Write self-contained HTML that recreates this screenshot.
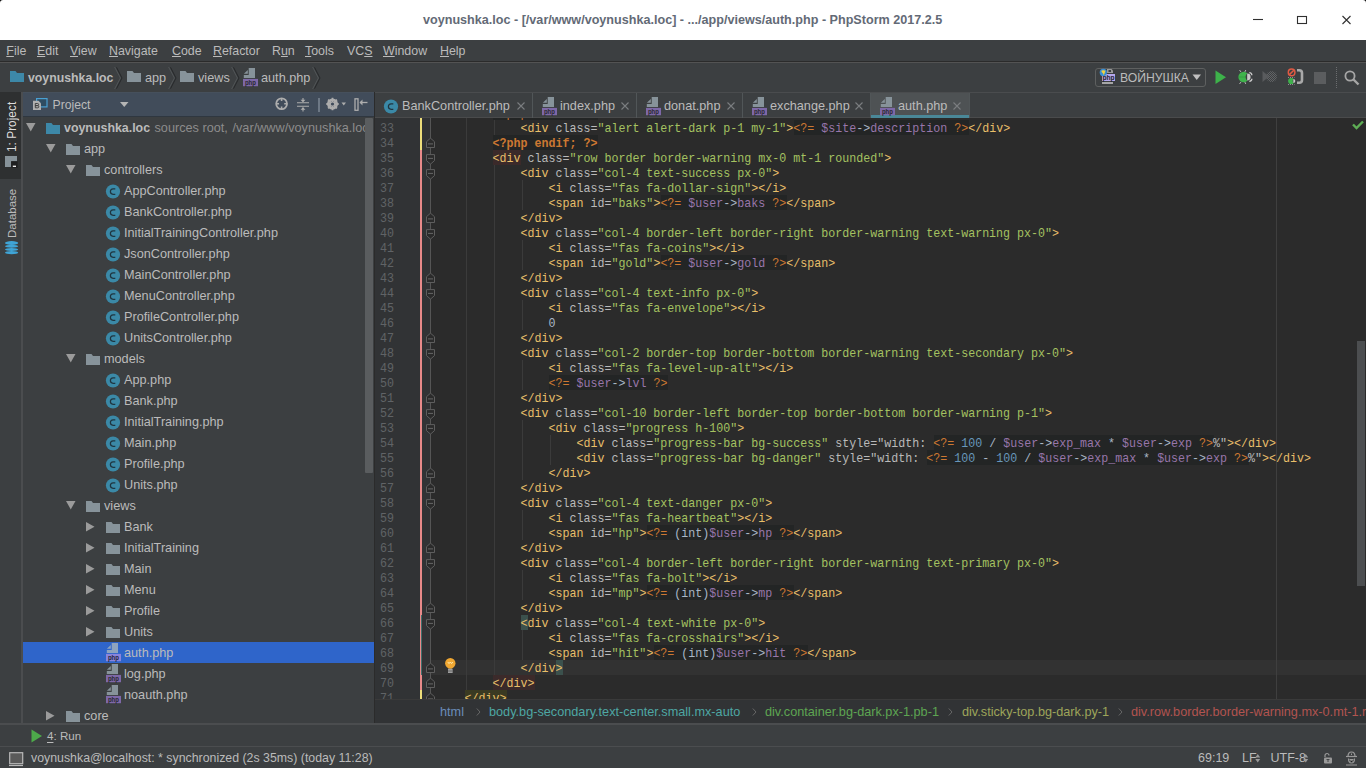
<!DOCTYPE html>
<html><head><meta charset="utf-8">
<style>
*{margin:0;padding:0;box-sizing:border-box}
html,body{width:1366px;height:768px;overflow:hidden;background:#3c3f41;font-family:"Liberation Sans",sans-serif;position:relative}
.A{position:absolute}
svg{position:absolute;overflow:visible}
#title{position:absolute;left:0;top:0;width:1366px;height:40px;background:#fff}
#title .tl{position:absolute;left:423px;top:13px;font-size:12.6px;font-weight:bold;color:#636a76;white-space:nowrap}
#menu{position:absolute;left:0;top:40px;width:1366px;height:21px;background:#3c3f41}
#menu span{position:absolute;top:3px;font-size:12.4px;color:#bbbbbb;white-space:nowrap;line-height:16px}
#menu u{text-decoration:underline;text-underline-offset:0.5px;text-decoration-thickness:1px}
#sep1{position:absolute;left:0;top:61px;width:1366px;height:1px;background:#2b2b2b}
#nav{position:absolute;left:0;top:62px;width:1366px;height:30px;background:#3c3f41}
.nt{position:absolute;top:8px;font-size:12.7px;color:#bbbbbb;white-space:nowrap;line-height:16px}
#strip{position:absolute;left:0;top:92px;width:23px;height:631px;background:#3c3f41;border-right:2px solid #4b4d4f}
#stripsel{position:absolute;left:0;top:92px;width:21px;height:87px;background:#2e3031}
.vt{position:absolute;transform-origin:0 0;transform:rotate(-90deg);font-size:12.6px;color:#bbbbbb;white-space:nowrap;line-height:14px}
#proj{position:absolute;left:23px;top:92px;width:351px;height:631px;background:#3c3f41}
#phead{position:absolute;left:23px;top:92px;width:351px;height:25px;background:#414c5a;border-top:1px solid #46505c;border-bottom:1px solid #2f3740}
.tt{position:absolute;font-size:12.7px;color:#bbbbbb;white-space:nowrap;line-height:20px;height:20px}
.tt.b{font-weight:bold;font-size:12.4px}
.tt.gr{color:#8c8c8c}
.sel{position:absolute;left:23px;width:351px;height:21px;background:#2f65ca}
#pscroll{position:absolute;left:365px;top:118px;width:8px;height:355px;background:#5a5d5f;border-radius:1px}
#vsplit{position:absolute;left:374px;top:92px;width:1px;height:631px;background:#2b2b2b}
#editor{position:absolute;left:375px;top:118px;width:991px;height:581px;background:#2b2b2b;overflow:hidden}
#tabs{position:absolute;left:375px;top:92px;width:991px;height:26px;background:#3c3f41;border-top:1px solid #4a4c4e}
.tab{position:absolute;top:0;height:25px;border-right:1px solid #515658}
.tab.act{background:#4e5254}
.tab.act:after{content:"";position:absolute;left:0;right:0;bottom:0;height:3.5px;background:#4a8898}
.tabt{position:absolute;top:5px;font-size:12.7px;color:#bbbbbb;white-space:nowrap;line-height:16px}
.ln{position:absolute;left:61.5px;height:15px;line-height:15px;padding-top:2px;transform:scaleY(1.15);transform-origin:0 11.7px;font-family:"Liberation Mono",monospace;font-size:11.667px;white-space:pre;color:#a9b7c6}
.lnum{position:absolute;left:0;width:19px;text-align:right;height:15px;line-height:15px;padding-top:2px;transform:scaleY(1.15);transform-origin:0 11.7px;font-family:"Liberation Mono",monospace;font-size:11.667px;color:#606366}
.t{color:#e8bf6a}.a{color:#bababa}.v{color:#a5c261}.d{color:#a9b7c6}.p{color:#cc7832}.pb{color:#cc7832;font-weight:bold}
.var{color:#9876aa}.n{color:#6897bb}
.P{background:#232525}
.hl35{color:#e8bf6a;background:#3b2a2a}
.hl70{color:#e8bf6a;background:#3b2a2a}
.hl71{color:#e8bf6a;background:#3a3a22}
.bm{color:#e8bf6a;background:#3b514d}
#crumbs{position:absolute;left:375px;top:699px;width:991px;height:24px;background:#313335;border-top:1px solid #3a3a3a}
.cr{position:absolute;top:4px;font-size:12.7px;white-space:nowrap;line-height:16px}
#runbar{position:absolute;left:0;top:723px;width:1366px;height:23px;background:#3c3f41;border-top:2px solid #4b4d4f}
#status{position:absolute;left:0;top:746px;width:1366px;height:22px;background:#3c3f41;border-top:1px solid #4b4d4f}
.st{position:absolute;font-size:12.5px;color:#bbbbbb;white-space:nowrap;line-height:16px}
</style></head><body>
<div id="title"><div class="tl">voynushka.loc - [/var/www/voynushka.loc] - .../app/views/auth.php - PhpStorm 2017.2.5</div>
<svg style="left:0;top:0" width="4" height="4"><path d="M0 0H3A3 3 0 0 0 0 3Z" fill="#000"/></svg>
<svg style="left:1362px;top:0" width="4" height="4"><path d="M4 0H1A3 3 0 0 1 4 3Z" fill="#000"/></svg>
<svg style="left:1252px;top:14px" width="12" height="12"><path d="M1 5.5H11" stroke="#303030" stroke-width="1.1"/></svg>
<svg style="left:1296px;top:15px" width="12" height="12"><rect x="1.5" y="1.5" width="9" height="7" fill="none" stroke="#303030" stroke-width="1.1"/></svg>
<svg style="left:1341px;top:15px" width="12" height="12"><path d="M1.5 1L9.5 9M9.5 1L1.5 9" stroke="#303030" stroke-width="1.1"/></svg>
</div>
<div id="menu">
<span style="left:6.3px"><u>F</u>ile</span><span style="left:37px"><u>E</u>dit</span><span style="left:70px"><u>V</u>iew</span><span style="left:109px"><u>N</u>avigate</span><span style="left:172px"><u>C</u>ode</span><span style="left:213px"><u>R</u>efactor</span><span style="left:272px">R<u>u</u>n</span><span style="left:305px"><u>T</u>ools</span><span style="left:347px">VC<u>S</u></span><span style="left:383px"><u>W</u>indow</span><span style="left:440px"><u>H</u>elp</span>
</div>
<div id="sep1"></div>
<div id="nav"><svg class="ic" style="left:10px;top:9px" width="15" height="12" viewBox="0 0 15 12"><path d="M0 0H5.5L7 2H14V11H0Z" fill="#3d88a8"/></svg>
<div class="nt" style="left:28px;font-weight:bold;font-size:12.3px">voynushka.loc</div>
<svg style="left:114.0px;top:4.5px" width="9" height="23" viewBox="0 0 9 23"><path d="M0.6 0L6.4 11L0.6 22" stroke="#505456" stroke-width="1" fill="none"/><path d="M2.5 0.3L8 11L2.5 21.7" stroke="#26282a" stroke-width="1" fill="none"/></svg>
<svg class="ic" style="left:127px;top:9px" width="15" height="12" viewBox="0 0 15 12"><path d="M0 0H5.5L7 2H14V11H0Z" fill="#87939a"/></svg>
<div class="nt" style="left:145px">app</div>
<svg style="left:167.5px;top:4.5px" width="9" height="23" viewBox="0 0 9 23"><path d="M0.6 0L6.4 11L0.6 22" stroke="#505456" stroke-width="1" fill="none"/><path d="M2.5 0.3L8 11L2.5 21.7" stroke="#26282a" stroke-width="1" fill="none"/></svg>
<svg class="ic" style="left:180px;top:9px" width="15" height="12" viewBox="0 0 15 12"><path d="M0 0H5.5L7 2H14V11H0Z" fill="#87939a"/></svg>
<div class="nt" style="left:198px">views</div>
<svg style="left:231.0px;top:4.5px" width="9" height="23" viewBox="0 0 9 23"><path d="M0.6 0L6.4 11L0.6 22" stroke="#505456" stroke-width="1" fill="none"/><path d="M2.5 0.3L8 11L2.5 21.7" stroke="#26282a" stroke-width="1" fill="none"/></svg>
<svg class="ic" style="left:243.0px;top:5.5px" width="16" height="18" viewBox="0 0 16 18"><path d="M5.7 0H12V10H0.8V7H5.7Z" fill="#87939a"/><path d="M0.8 5.75L4.8 1.9V5.75Z" fill="#87939a"/><rect x="0" y="10.9" width="15" height="7.3" fill="#7e68a8"/><text x="1.9" y="17" font-family="Liberation Sans" font-weight="bold" font-size="7.4" fill="#2a2830" textLength="11.1" lengthAdjust="spacingAndGlyphs">php</text></svg>
<div class="nt" style="left:261px">auth.php</div>
<svg style="left:312.0px;top:4.5px" width="9" height="23" viewBox="0 0 9 23"><path d="M0.6 0L6.4 11L0.6 22" stroke="#505456" stroke-width="1" fill="none"/><path d="M2.5 0.3L8 11L2.5 21.7" stroke="#26282a" stroke-width="1" fill="none"/></svg>
<div class="A" style="left:1095px;top:6px;width:111px;height:19px;border:1px solid #5e6060;border-radius:3px"></div>
<svg style="left:1099px;top:6px" width="18" height="18" viewBox="0 0 18 18"><path d="M8 1H12.5L14 2.5V5H8Z" fill="#9a9a9a"/><path d="M9.5 2L12 2V4H9.5Z" fill="#3c3f41"/><rect x="3" y="6" width="13" height="7" fill="#b5a7ee"/><text x="9.5" y="11.8" font-family="Liberation Sans" font-weight="bold" font-size="6.6" fill="#1e1e28" text-anchor="middle">php</text><rect x="3" y="14" width="11" height="2" fill="#a6a6a6"/><circle cx="4.3" cy="4.4" r="3.6" fill="#3b8fd4"/><path d="M2.6 2.6Q4.5 1.6 6.5 2.8L5.5 5.4L4.6 7.3L4 5.2L2.6 4Z" fill="#f2d33c"/></svg>
<div class="nt" style="left:1120px;top:8px;font-size:12.2px">ВОЙНУШКА</div>
<svg style="left:1192px;top:12px" width="10" height="7"><path d="M0.5 0.5H9L4.75 6Z" fill="#c0c0c0"/></svg>
<svg style="left:1215px;top:8px" width="12" height="15"><path d="M0.5 0.5L11 7.2L0.5 14Z" fill="#3db24a"/></svg>
<svg style="left:1237px;top:7px" width="17" height="16" viewBox="0 0 17 16"><path d="M2.5 1L4 3M8.8 1L7.8 3M2.5 15L4 13M8.8 15L7.8 13" stroke="#bdbdbd" stroke-width="0.9"/><circle cx="6.6" cy="8" r="5.2" fill="#3fb34c"/><path d="M1.5 8H11" stroke="#2f9a3c" stroke-width="0.7"/><circle cx="12.6" cy="8" r="4" fill="#3c3f41"/><path d="M10.2 4.6A3.4 3.4 0 0 1 10.2 11.4Z" fill="#c9c9c9"/><path d="M12.3 3.6Q14.9 3.9 14.9 6.2M12.3 12.4Q14.9 12.1 14.9 9.8" stroke="#c9c9c9" stroke-width="1.3" fill="none"/></svg>
<svg style="left:1262px;top:7px" width="16" height="16" viewBox="0 0 16 16"><defs><pattern id="dp" width="2" height="2" patternUnits="userSpaceOnUse"><rect width="1" height="1" fill="#626466"/><rect x="1" y="1" width="1" height="1" fill="#626466"/></pattern></defs><circle cx="9.5" cy="7.5" r="5.5" fill="url(#dp)"/><path d="M0.5 2L7 7.5L0.5 13Z" fill="#595b5d"/></svg>
<svg style="left:1287px;top:6px" width="17" height="17" viewBox="0 0 17 17"><circle cx="4.6" cy="4.4" r="3.3" fill="none" stroke="#e05a44" stroke-width="1.5"/><path d="M2.4 6.6L6.8 2.2" stroke="#e05a44" stroke-width="1.5"/><circle cx="4.2" cy="13" r="3.1" fill="#3fb34c"/><circle cx="7.8" cy="13" r="2.2" fill="#3c3f41"/><path d="M6.3 11A2 2 0 0 1 6.3 15Z" fill="#c9c9c9"/><path d="M1 9.5H7.5M1 16.5H7.5" stroke="#c9c9c9" stroke-width="0.6" stroke-dasharray="1 1"/><path d="M10 2.2H12.2A2.8 2.8 0 0 1 15 5V12A2.8 2.8 0 0 1 12.2 14.8H10" stroke="#a9a9a9" stroke-width="2.6" fill="none"/></svg>
<div class="A" style="left:1314px;top:10px;width:12px;height:12px;background:#5b5d5f"></div>
<div class="A" style="left:1336px;top:5px;width:1px;height:21px;border-left:1px dotted #6b6d6f"></div>
<svg style="left:1344px;top:8px" width="16" height="16" viewBox="0 0 16 16"><circle cx="6" cy="6" r="4.6" fill="none" stroke="#a6a6a6" stroke-width="1.8"/><path d="M9.5 9.5L14.5 14.5" stroke="#a6a6a6" stroke-width="2.4"/></svg></div><div class="A" style="left:0;top:62px;width:1366px;height:1px;background:#535353"></div>
<div id="strip"></div>
<div id="stripsel"></div>
<div class="vt" style="left:4.5px;top:151.5px;color:#dddddd;font-size:11.9px">1: Project</div>
<svg style="left:5px;top:156px" width="13" height="12" viewBox="0 0 13 12"><path d="M0 0H12V5.3H6V11H0Z" fill="#87939a"/><rect x="6.3" y="5.3" width="6.3" height="6.5" fill="#1e1f20"/><path d="M7.8 10.3H11" stroke="#eeeeee" stroke-width="1.4"/></svg>
<div class="vt" style="left:4.5px;top:238px;font-size:11.5px">Database</div>
<svg style="left:5px;top:240.5px" width="14" height="14" viewBox="0 0 14 14"><ellipse cx="6.6" cy="2" rx="6.6" ry="1.9" fill="#3fa4d6"/><ellipse cx="6.6" cy="5.3" rx="6.6" ry="1.5" fill="#3fa4d6"/><ellipse cx="6.6" cy="8.5" rx="6.6" ry="1.5" fill="#3fa4d6"/><ellipse cx="6.6" cy="11.7" rx="6.6" ry="1.6" fill="#3fa4d6"/></svg>
<div id="proj"></div>
<div id="phead"></div>
<svg style="left:33px;top:98px" width="15" height="13" viewBox="0 0 15 13"><rect x="3.6" y="0.6" width="10.4" height="8.3" fill="#2f4d62" stroke="#4aa0d2" stroke-width="1.2"/><path d="M0 2.8H5.5L8 5.3V12H0Z" fill="#b0b0b0"/><path d="M2.3 5.5H4.6Q5.6 5.5 5.6 6.6Q5.6 7.6 4.6 7.6H2.3ZM2.3 7.6H4.8Q5.8 7.6 5.8 8.7Q5.8 9.8 4.8 9.8H2.3Z" fill="none" stroke="#3a3a3a" stroke-width="0.9"/></svg>
<div class="tt" style="left:52.5px;top:94.5px;font-size:12.2px">Project</div>
<svg style="left:120px;top:102px" width="9" height="6"><path d="M0 0H8.5L4.25 5Z" fill="#b5b5b5"/></svg>
<svg style="left:275px;top:97px" width="14" height="14" viewBox="0 0 14 14"><circle cx="6.6" cy="6.8" r="5.4" fill="none" stroke="#adadad" stroke-width="1.8"/><path d="M6.6 1V4M6.6 9.6V12.6M1 6.8H4M9.2 6.8H12.2" stroke="#adadad" stroke-width="1.6"/></svg>
<svg style="left:297px;top:98px" width="13" height="14" viewBox="0 0 13 14"><path d="M0 4.8H12M0 8.2H12" stroke="#adadad" stroke-width="1.1"/><path d="M6 0V3.5M6 9.5V13.5" stroke="#adadad" stroke-width="1.1"/><path d="M3.5 1.8L6 4.3L8.5 1.8M3.5 11.7L6 9.2L8.5 11.7" fill="#adadad"/></svg>
<div class="A" style="left:318px;top:98px;width:2px;height:14px;background:#6d7885"></div>
<svg style="left:326px;top:97px" width="22" height="14" viewBox="0 0 22 14"><circle cx="6.5" cy="7" r="4.2" fill="none" stroke="#adadad" stroke-width="2.6"/><path d="M6.5 0.8V13.2M0.3 7H12.7M2.1 2.6L10.9 11.4M10.9 2.6L2.1 11.4" stroke="#adadad" stroke-width="1.8"/><circle cx="6.5" cy="7" r="1.6" fill="#3f4b5b"/><path d="M15.5 5.5H20L17.75 8.5Z" fill="#adadad"/></svg>
<svg style="left:354px;top:98px" width="14" height="13" viewBox="0 0 14 13"><rect x="1" y="0.8" width="3" height="11.5" fill="none" stroke="#adadad" stroke-width="1.3"/><path d="M6 4.5H13.5" stroke="#adadad" stroke-width="1.3"/><path d="M5.5 4.5L8.5 1.5V7.5Z" fill="#adadad"/></svg>
<svg class="ic" style="left:26px;top:123px" width="10" height="9" viewBox="0 0 10 9"><path d="M0 0H9.5L4.75 8.5Z" fill="#9b9b9b"/></svg>
<svg class="ic" style="left:46px;top:123px" width="15" height="12" viewBox="0 0 15 12"><path d="M0 0H5.5L7 2H14V11H0Z" fill="#3d88a8"/></svg>
<div class="tt b" style="left:64px;top:118px">voynushka.loc</div>
<div class="tt gr" style="left:154.5px;top:118px">sources root,</div>
<div class="tt gr" style="left:232.5px;top:118px">/var/www/voynushka.loc</div>
<svg class="ic" style="left:46px;top:144px" width="10" height="9" viewBox="0 0 10 9"><path d="M0 0H9.5L4.75 8.5Z" fill="#9b9b9b"/></svg>
<svg class="ic" style="left:66px;top:144px" width="15" height="12" viewBox="0 0 15 12"><path d="M0 0H5.5L7 2H14V11H0Z" fill="#87939a"/></svg>
<div class="tt" style="left:84px;top:139px">app</div>
<svg class="ic" style="left:66px;top:165px" width="10" height="9" viewBox="0 0 10 9"><path d="M0 0H9.5L4.75 8.5Z" fill="#9b9b9b"/></svg>
<svg class="ic" style="left:86px;top:165px" width="15" height="12" viewBox="0 0 15 12"><path d="M0 0H5.5L7 2H14V11H0Z" fill="#87939a"/></svg>
<div class="tt" style="left:104px;top:160px">controllers</div>
<svg class="ic" style="left:106.0px;top:183.5px" width="15" height="15" viewBox="0 0 15 15"><circle cx="7" cy="7.5" r="7.1" fill="#3b89a7"/><path d="M9.3 4.9H7.1Q4.4 4.9 4.4 7.6Q4.4 10.3 7.1 10.3H9.3" stroke="#1f3540" stroke-width="1.25" fill="none"/></svg>
<div class="tt" style="left:124px;top:181px">AppController.php</div>
<svg class="ic" style="left:106.0px;top:204.5px" width="15" height="15" viewBox="0 0 15 15"><circle cx="7" cy="7.5" r="7.1" fill="#3b89a7"/><path d="M9.3 4.9H7.1Q4.4 4.9 4.4 7.6Q4.4 10.3 7.1 10.3H9.3" stroke="#1f3540" stroke-width="1.25" fill="none"/></svg>
<div class="tt" style="left:124px;top:202px">BankController.php</div>
<svg class="ic" style="left:106.0px;top:225.5px" width="15" height="15" viewBox="0 0 15 15"><circle cx="7" cy="7.5" r="7.1" fill="#3b89a7"/><path d="M9.3 4.9H7.1Q4.4 4.9 4.4 7.6Q4.4 10.3 7.1 10.3H9.3" stroke="#1f3540" stroke-width="1.25" fill="none"/></svg>
<div class="tt" style="left:124px;top:223px">InitialTrainingController.php</div>
<svg class="ic" style="left:106.0px;top:246.5px" width="15" height="15" viewBox="0 0 15 15"><circle cx="7" cy="7.5" r="7.1" fill="#3b89a7"/><path d="M9.3 4.9H7.1Q4.4 4.9 4.4 7.6Q4.4 10.3 7.1 10.3H9.3" stroke="#1f3540" stroke-width="1.25" fill="none"/></svg>
<div class="tt" style="left:124px;top:244px">JsonController.php</div>
<svg class="ic" style="left:106.0px;top:267.5px" width="15" height="15" viewBox="0 0 15 15"><circle cx="7" cy="7.5" r="7.1" fill="#3b89a7"/><path d="M9.3 4.9H7.1Q4.4 4.9 4.4 7.6Q4.4 10.3 7.1 10.3H9.3" stroke="#1f3540" stroke-width="1.25" fill="none"/></svg>
<div class="tt" style="left:124px;top:265px">MainController.php</div>
<svg class="ic" style="left:106.0px;top:288.5px" width="15" height="15" viewBox="0 0 15 15"><circle cx="7" cy="7.5" r="7.1" fill="#3b89a7"/><path d="M9.3 4.9H7.1Q4.4 4.9 4.4 7.6Q4.4 10.3 7.1 10.3H9.3" stroke="#1f3540" stroke-width="1.25" fill="none"/></svg>
<div class="tt" style="left:124px;top:286px">MenuController.php</div>
<svg class="ic" style="left:106.0px;top:309.5px" width="15" height="15" viewBox="0 0 15 15"><circle cx="7" cy="7.5" r="7.1" fill="#3b89a7"/><path d="M9.3 4.9H7.1Q4.4 4.9 4.4 7.6Q4.4 10.3 7.1 10.3H9.3" stroke="#1f3540" stroke-width="1.25" fill="none"/></svg>
<div class="tt" style="left:124px;top:307px">ProfileController.php</div>
<svg class="ic" style="left:106.0px;top:330.5px" width="15" height="15" viewBox="0 0 15 15"><circle cx="7" cy="7.5" r="7.1" fill="#3b89a7"/><path d="M9.3 4.9H7.1Q4.4 4.9 4.4 7.6Q4.4 10.3 7.1 10.3H9.3" stroke="#1f3540" stroke-width="1.25" fill="none"/></svg>
<div class="tt" style="left:124px;top:328px">UnitsController.php</div>
<svg class="ic" style="left:66px;top:354px" width="10" height="9" viewBox="0 0 10 9"><path d="M0 0H9.5L4.75 8.5Z" fill="#9b9b9b"/></svg>
<svg class="ic" style="left:86px;top:354px" width="15" height="12" viewBox="0 0 15 12"><path d="M0 0H5.5L7 2H14V11H0Z" fill="#87939a"/></svg>
<div class="tt" style="left:104px;top:349px">models</div>
<svg class="ic" style="left:106.0px;top:372.5px" width="15" height="15" viewBox="0 0 15 15"><circle cx="7" cy="7.5" r="7.1" fill="#3b89a7"/><path d="M9.3 4.9H7.1Q4.4 4.9 4.4 7.6Q4.4 10.3 7.1 10.3H9.3" stroke="#1f3540" stroke-width="1.25" fill="none"/></svg>
<div class="tt" style="left:124px;top:370px">App.php</div>
<svg class="ic" style="left:106.0px;top:393.5px" width="15" height="15" viewBox="0 0 15 15"><circle cx="7" cy="7.5" r="7.1" fill="#3b89a7"/><path d="M9.3 4.9H7.1Q4.4 4.9 4.4 7.6Q4.4 10.3 7.1 10.3H9.3" stroke="#1f3540" stroke-width="1.25" fill="none"/></svg>
<div class="tt" style="left:124px;top:391px">Bank.php</div>
<svg class="ic" style="left:106.0px;top:414.5px" width="15" height="15" viewBox="0 0 15 15"><circle cx="7" cy="7.5" r="7.1" fill="#3b89a7"/><path d="M9.3 4.9H7.1Q4.4 4.9 4.4 7.6Q4.4 10.3 7.1 10.3H9.3" stroke="#1f3540" stroke-width="1.25" fill="none"/></svg>
<div class="tt" style="left:124px;top:412px">InitialTraining.php</div>
<svg class="ic" style="left:106.0px;top:435.5px" width="15" height="15" viewBox="0 0 15 15"><circle cx="7" cy="7.5" r="7.1" fill="#3b89a7"/><path d="M9.3 4.9H7.1Q4.4 4.9 4.4 7.6Q4.4 10.3 7.1 10.3H9.3" stroke="#1f3540" stroke-width="1.25" fill="none"/></svg>
<div class="tt" style="left:124px;top:433px">Main.php</div>
<svg class="ic" style="left:106.0px;top:456.5px" width="15" height="15" viewBox="0 0 15 15"><circle cx="7" cy="7.5" r="7.1" fill="#3b89a7"/><path d="M9.3 4.9H7.1Q4.4 4.9 4.4 7.6Q4.4 10.3 7.1 10.3H9.3" stroke="#1f3540" stroke-width="1.25" fill="none"/></svg>
<div class="tt" style="left:124px;top:454px">Profile.php</div>
<svg class="ic" style="left:106.0px;top:477.5px" width="15" height="15" viewBox="0 0 15 15"><circle cx="7" cy="7.5" r="7.1" fill="#3b89a7"/><path d="M9.3 4.9H7.1Q4.4 4.9 4.4 7.6Q4.4 10.3 7.1 10.3H9.3" stroke="#1f3540" stroke-width="1.25" fill="none"/></svg>
<div class="tt" style="left:124px;top:475px">Units.php</div>
<svg class="ic" style="left:66px;top:501px" width="10" height="9" viewBox="0 0 10 9"><path d="M0 0H9.5L4.75 8.5Z" fill="#9b9b9b"/></svg>
<svg class="ic" style="left:86px;top:501px" width="15" height="12" viewBox="0 0 15 12"><path d="M0 0H5.5L7 2H14V11H0Z" fill="#87939a"/></svg>
<div class="tt" style="left:104px;top:496px">views</div>
<svg class="ic" style="left:86px;top:522px" width="9" height="10" viewBox="0 0 9 10"><path d="M0 0V9.5L8.5 4.75Z" fill="#9b9b9b"/></svg>
<svg class="ic" style="left:106px;top:522px" width="15" height="12" viewBox="0 0 15 12"><path d="M0 0H5.5L7 2H14V11H0Z" fill="#87939a"/></svg>
<div class="tt" style="left:124px;top:517px">Bank</div>
<svg class="ic" style="left:86px;top:543px" width="9" height="10" viewBox="0 0 9 10"><path d="M0 0V9.5L8.5 4.75Z" fill="#9b9b9b"/></svg>
<svg class="ic" style="left:106px;top:543px" width="15" height="12" viewBox="0 0 15 12"><path d="M0 0H5.5L7 2H14V11H0Z" fill="#87939a"/></svg>
<div class="tt" style="left:124px;top:538px">InitialTraining</div>
<svg class="ic" style="left:86px;top:564px" width="9" height="10" viewBox="0 0 9 10"><path d="M0 0V9.5L8.5 4.75Z" fill="#9b9b9b"/></svg>
<svg class="ic" style="left:106px;top:564px" width="15" height="12" viewBox="0 0 15 12"><path d="M0 0H5.5L7 2H14V11H0Z" fill="#87939a"/></svg>
<div class="tt" style="left:124px;top:559px">Main</div>
<svg class="ic" style="left:86px;top:585px" width="9" height="10" viewBox="0 0 9 10"><path d="M0 0V9.5L8.5 4.75Z" fill="#9b9b9b"/></svg>
<svg class="ic" style="left:106px;top:585px" width="15" height="12" viewBox="0 0 15 12"><path d="M0 0H5.5L7 2H14V11H0Z" fill="#87939a"/></svg>
<div class="tt" style="left:124px;top:580px">Menu</div>
<svg class="ic" style="left:86px;top:606px" width="9" height="10" viewBox="0 0 9 10"><path d="M0 0V9.5L8.5 4.75Z" fill="#9b9b9b"/></svg>
<svg class="ic" style="left:106px;top:606px" width="15" height="12" viewBox="0 0 15 12"><path d="M0 0H5.5L7 2H14V11H0Z" fill="#87939a"/></svg>
<div class="tt" style="left:124px;top:601px">Profile</div>
<svg class="ic" style="left:86px;top:627px" width="9" height="10" viewBox="0 0 9 10"><path d="M0 0V9.5L8.5 4.75Z" fill="#9b9b9b"/></svg>
<svg class="ic" style="left:106px;top:627px" width="15" height="12" viewBox="0 0 15 12"><path d="M0 0H5.5L7 2H14V11H0Z" fill="#87939a"/></svg>
<div class="tt" style="left:124px;top:622px">Units</div>
<div class="sel" style="top:642px"></div>
<svg class="ic" style="left:106.0px;top:643.0px" width="16" height="18" viewBox="0 0 16 18"><path d="M5.7 0H12V10H0.8V7H5.7Z" fill="#8ea4be"/><path d="M0.8 5.75L4.8 1.9V5.75Z" fill="#8ea4be"/><rect x="0" y="10.9" width="15" height="7.3" fill="#8a85dc"/><text x="1.9" y="17" font-family="Liberation Sans" font-weight="bold" font-size="7.4" fill="#24243a" textLength="11.1" lengthAdjust="spacingAndGlyphs">php</text></svg>
<div class="tt" style="left:124px;top:643px">auth.php</div>
<svg class="ic" style="left:106.0px;top:664.0px" width="16" height="18" viewBox="0 0 16 18"><path d="M5.7 0H12V10H0.8V7H5.7Z" fill="#87939a"/><path d="M0.8 5.75L4.8 1.9V5.75Z" fill="#87939a"/><rect x="0" y="10.9" width="15" height="7.3" fill="#7e68a8"/><text x="1.9" y="17" font-family="Liberation Sans" font-weight="bold" font-size="7.4" fill="#2a2830" textLength="11.1" lengthAdjust="spacingAndGlyphs">php</text></svg>
<div class="tt" style="left:124px;top:664px">log.php</div>
<svg class="ic" style="left:106.0px;top:685.0px" width="16" height="18" viewBox="0 0 16 18"><path d="M5.7 0H12V10H0.8V7H5.7Z" fill="#87939a"/><path d="M0.8 5.75L4.8 1.9V5.75Z" fill="#87939a"/><rect x="0" y="10.9" width="15" height="7.3" fill="#7e68a8"/><text x="1.9" y="17" font-family="Liberation Sans" font-weight="bold" font-size="7.4" fill="#2a2830" textLength="11.1" lengthAdjust="spacingAndGlyphs">php</text></svg>
<div class="tt" style="left:124px;top:685px">noauth.php</div>
<svg class="ic" style="left:46px;top:711px" width="9" height="10" viewBox="0 0 9 10"><path d="M0 0V9.5L8.5 4.75Z" fill="#9b9b9b"/></svg>
<svg class="ic" style="left:66px;top:711px" width="15" height="12" viewBox="0 0 15 12"><path d="M0 0H5.5L7 2H14V11H0Z" fill="#87939a"/></svg>
<div class="tt" style="left:84px;top:706px">core</div>
<div id="pscroll"></div>
<div id="vsplit"></div>
<div id="tabs"><div class="A" style="left:0;top:24px;width:991px;height:1px;background:#4a4b4c"></div><div class="tab" style="left:0px;width:158px"></div>
<svg class="ic" style="left:9.0px;top:6.0px" width="15" height="15" viewBox="0 0 15 15"><circle cx="7" cy="7.5" r="7.1" fill="#3b89a7"/><path d="M9.3 4.9H7.1Q4.4 4.9 4.4 7.6Q4.4 10.3 7.1 10.3H9.3" stroke="#1f3540" stroke-width="1.25" fill="none"/></svg>
<div class="tabt" style="left:27px">BankController.php</div>
<svg style="left:142px;top:9px" width="8" height="8" viewBox="0 0 8 8"><path d="M0.5 0.5L7.5 7.5M7.5 0.5L0.5 7.5" stroke="#7b7e80" stroke-width="1.1"/></svg>
<div class="tab" style="left:158px;width:104px"></div>
<svg class="ic" style="left:167.0px;top:3.5px" width="16" height="18" viewBox="0 0 16 18"><path d="M5.7 0H12V10H0.8V7H5.7Z" fill="#87939a"/><path d="M0.8 5.75L4.8 1.9V5.75Z" fill="#87939a"/><rect x="0" y="10.9" width="15" height="7.3" fill="#7e68a8"/><text x="1.9" y="17" font-family="Liberation Sans" font-weight="bold" font-size="7.4" fill="#2a2830" textLength="11.1" lengthAdjust="spacingAndGlyphs">php</text></svg>
<div class="tabt" style="left:185px">index.php</div>
<svg style="left:246px;top:9px" width="8" height="8" viewBox="0 0 8 8"><path d="M0.5 0.5L7.5 7.5M7.5 0.5L0.5 7.5" stroke="#7b7e80" stroke-width="1.1"/></svg>
<div class="tab" style="left:262px;width:106px"></div>
<svg class="ic" style="left:271.0px;top:3.5px" width="16" height="18" viewBox="0 0 16 18"><path d="M5.7 0H12V10H0.8V7H5.7Z" fill="#87939a"/><path d="M0.8 5.75L4.8 1.9V5.75Z" fill="#87939a"/><rect x="0" y="10.9" width="15" height="7.3" fill="#7e68a8"/><text x="1.9" y="17" font-family="Liberation Sans" font-weight="bold" font-size="7.4" fill="#2a2830" textLength="11.1" lengthAdjust="spacingAndGlyphs">php</text></svg>
<div class="tabt" style="left:289px">donat.php</div>
<svg style="left:352px;top:9px" width="8" height="8" viewBox="0 0 8 8"><path d="M0.5 0.5L7.5 7.5M7.5 0.5L0.5 7.5" stroke="#7b7e80" stroke-width="1.1"/></svg>
<div class="tab" style="left:368px;width:128px"></div>
<svg class="ic" style="left:377.0px;top:3.5px" width="16" height="18" viewBox="0 0 16 18"><path d="M5.7 0H12V10H0.8V7H5.7Z" fill="#87939a"/><path d="M0.8 5.75L4.8 1.9V5.75Z" fill="#87939a"/><rect x="0" y="10.9" width="15" height="7.3" fill="#7e68a8"/><text x="1.9" y="17" font-family="Liberation Sans" font-weight="bold" font-size="7.4" fill="#2a2830" textLength="11.1" lengthAdjust="spacingAndGlyphs">php</text></svg>
<div class="tabt" style="left:395px">exchange.php</div>
<svg style="left:480px;top:9px" width="8" height="8" viewBox="0 0 8 8"><path d="M0.5 0.5L7.5 7.5M7.5 0.5L0.5 7.5" stroke="#7b7e80" stroke-width="1.1"/></svg>
<div class="tab act" style="left:496px;width:99px"></div>
<svg class="ic" style="left:505.0px;top:3.5px" width="16" height="18" viewBox="0 0 16 18"><path d="M5.7 0H12V10H0.8V7H5.7Z" fill="#87939a"/><path d="M0.8 5.75L4.8 1.9V5.75Z" fill="#87939a"/><rect x="0" y="10.9" width="15" height="7.3" fill="#7e68a8"/><text x="1.9" y="17" font-family="Liberation Sans" font-weight="bold" font-size="7.4" fill="#2a2830" textLength="11.1" lengthAdjust="spacingAndGlyphs">php</text></svg>
<div class="tabt" style="left:523px">auth.php</div>
<svg style="left:578px;top:9px" width="8" height="8" viewBox="0 0 8 8"><path d="M0.5 0.5L7.5 7.5M7.5 0.5L0.5 7.5" stroke="#7b7e80" stroke-width="1.1"/></svg></div>
<div id="editor">
<div class="A" style="left:0;top:0;width:56px;height:582px;background:#313335"></div>
<div class="A" style="left:45px;top:0;width:2px;height:32px;background:#ecdd7a"></div>
<div class="A" style="left:45px;top:32px;width:2px;height:540px;background:#e88a8a"></div>
<div class="A" style="left:45px;top:572px;width:2px;height:15px;background:#ecdd7a"></div>
<div class="A" style="left:46px;top:497px;width:1px;height:60px;background:#3f6e6c"></div>
<div class="A" style="left:56px;top:542px;width:935px;height:15px;background:#323232"></div>
<div class="A" style="left:91px;top:0px;width:1px;height:572px;background:#3b3b3b"></div>
<div class="A" style="left:119px;top:0px;width:1px;height:17px;background:#3b3b3b"></div>
<div class="A" style="left:119px;top:47px;width:1px;height:510px;background:#3b3b3b"></div>
<div class="A" style="left:147px;top:62px;width:1px;height:30px;background:#3b3b3b"></div>
<div class="A" style="left:147px;top:122px;width:1px;height:30px;background:#3b3b3b"></div>
<div class="A" style="left:147px;top:182px;width:1px;height:30px;background:#3b3b3b"></div>
<div class="A" style="left:147px;top:242px;width:1px;height:30px;background:#3b3b3b"></div>
<div class="A" style="left:147px;top:302px;width:1px;height:60px;background:#3b3b3b"></div>
<div class="A" style="left:147px;top:392px;width:1px;height:30px;background:#3b3b3b"></div>
<div class="A" style="left:147px;top:452px;width:1px;height:30px;background:#3b3b3b"></div>
<div class="A" style="left:147px;top:512px;width:1px;height:30px;background:#3b3b3b"></div>
<div class="A" style="left:175px;top:317px;width:1px;height:30px;background:#3b3b3b"></div>
<div class="A" style="left:901px;top:0;width:1px;height:582px;background:#3f3f3f"></div>
<div class="A" style="left:55px;top:0;width:1px;height:582px;background:#555555"></div>
<svg style="left:51px;top:19.5px" width="10" height="11" viewBox="0 0 10 11"><path d="M4.5 0.2L8.5 3.7V9.5H0.5V3.7Z" fill="#2b2b2b" stroke="#5e5e5e"/><path d="M2 5.9H7" stroke="#666"/></svg>
<svg style="left:51px;top:94.5px" width="10" height="11" viewBox="0 0 10 11"><path d="M4.5 0.2L8.5 3.7V9.5H0.5V3.7Z" fill="#2b2b2b" stroke="#5e5e5e"/><path d="M2 5.9H7" stroke="#666"/></svg>
<svg style="left:51px;top:154.5px" width="10" height="11" viewBox="0 0 10 11"><path d="M4.5 0.2L8.5 3.7V9.5H0.5V3.7Z" fill="#2b2b2b" stroke="#5e5e5e"/><path d="M2 5.9H7" stroke="#666"/></svg>
<svg style="left:51px;top:214.5px" width="10" height="11" viewBox="0 0 10 11"><path d="M4.5 0.2L8.5 3.7V9.5H0.5V3.7Z" fill="#2b2b2b" stroke="#5e5e5e"/><path d="M2 5.9H7" stroke="#666"/></svg>
<svg style="left:51px;top:274.5px" width="10" height="11" viewBox="0 0 10 11"><path d="M4.5 0.2L8.5 3.7V9.5H0.5V3.7Z" fill="#2b2b2b" stroke="#5e5e5e"/><path d="M2 5.9H7" stroke="#666"/></svg>
<svg style="left:51px;top:349.5px" width="10" height="11" viewBox="0 0 10 11"><path d="M4.5 0.2L8.5 3.7V9.5H0.5V3.7Z" fill="#2b2b2b" stroke="#5e5e5e"/><path d="M2 5.9H7" stroke="#666"/></svg>
<svg style="left:51px;top:364.5px" width="10" height="11" viewBox="0 0 10 11"><path d="M4.5 0.2L8.5 3.7V9.5H0.5V3.7Z" fill="#2b2b2b" stroke="#5e5e5e"/><path d="M2 5.9H7" stroke="#666"/></svg>
<svg style="left:51px;top:424.5px" width="10" height="11" viewBox="0 0 10 11"><path d="M4.5 0.2L8.5 3.7V9.5H0.5V3.7Z" fill="#2b2b2b" stroke="#5e5e5e"/><path d="M2 5.9H7" stroke="#666"/></svg>
<svg style="left:51px;top:484.5px" width="10" height="11" viewBox="0 0 10 11"><path d="M4.5 0.2L8.5 3.7V9.5H0.5V3.7Z" fill="#2b2b2b" stroke="#5e5e5e"/><path d="M2 5.9H7" stroke="#666"/></svg>
<svg style="left:51px;top:544.5px" width="10" height="11" viewBox="0 0 10 11"><path d="M4.5 0.2L8.5 3.7V9.5H0.5V3.7Z" fill="#2b2b2b" stroke="#5e5e5e"/><path d="M2 5.9H7" stroke="#666"/></svg>
<svg style="left:51px;top:559.5px" width="10" height="11" viewBox="0 0 10 11"><path d="M4.5 0.2L8.5 3.7V9.5H0.5V3.7Z" fill="#2b2b2b" stroke="#5e5e5e"/><path d="M2 5.9H7" stroke="#666"/></svg>
<svg style="left:51px;top:574.5px" width="10" height="11" viewBox="0 0 10 11"><path d="M4.5 0.2L8.5 3.7V9.5H0.5V3.7Z" fill="#2b2b2b" stroke="#5e5e5e"/><path d="M2 5.9H7" stroke="#666"/></svg>
<svg style="left:51px;top:36.0px" width="10" height="11" viewBox="0 0 10 11"><path d="M0.5 0.6H8.5V6.6L4.5 10.1L0.5 6.6Z" fill="#2b2b2b" stroke="#5e5e5e"/><path d="M2 4.4H7" stroke="#666"/></svg>
<svg style="left:51px;top:51.0px" width="10" height="11" viewBox="0 0 10 11"><path d="M0.5 0.6H8.5V6.6L4.5 10.1L0.5 6.6Z" fill="#2b2b2b" stroke="#5e5e5e"/><path d="M2 4.4H7" stroke="#666"/></svg>
<svg style="left:51px;top:111.0px" width="10" height="11" viewBox="0 0 10 11"><path d="M0.5 0.6H8.5V6.6L4.5 10.1L0.5 6.6Z" fill="#2b2b2b" stroke="#5e5e5e"/><path d="M2 4.4H7" stroke="#666"/></svg>
<svg style="left:51px;top:171.0px" width="10" height="11" viewBox="0 0 10 11"><path d="M0.5 0.6H8.5V6.6L4.5 10.1L0.5 6.6Z" fill="#2b2b2b" stroke="#5e5e5e"/><path d="M2 4.4H7" stroke="#666"/></svg>
<svg style="left:51px;top:231.0px" width="10" height="11" viewBox="0 0 10 11"><path d="M0.5 0.6H8.5V6.6L4.5 10.1L0.5 6.6Z" fill="#2b2b2b" stroke="#5e5e5e"/><path d="M2 4.4H7" stroke="#666"/></svg>
<svg style="left:51px;top:291.0px" width="10" height="11" viewBox="0 0 10 11"><path d="M0.5 0.6H8.5V6.6L4.5 10.1L0.5 6.6Z" fill="#2b2b2b" stroke="#5e5e5e"/><path d="M2 4.4H7" stroke="#666"/></svg>
<svg style="left:51px;top:306.0px" width="10" height="11" viewBox="0 0 10 11"><path d="M0.5 0.6H8.5V6.6L4.5 10.1L0.5 6.6Z" fill="#2b2b2b" stroke="#5e5e5e"/><path d="M2 4.4H7" stroke="#666"/></svg>
<svg style="left:51px;top:381.0px" width="10" height="11" viewBox="0 0 10 11"><path d="M0.5 0.6H8.5V6.6L4.5 10.1L0.5 6.6Z" fill="#2b2b2b" stroke="#5e5e5e"/><path d="M2 4.4H7" stroke="#666"/></svg>
<svg style="left:51px;top:441.0px" width="10" height="11" viewBox="0 0 10 11"><path d="M0.5 0.6H8.5V6.6L4.5 10.1L0.5 6.6Z" fill="#2b2b2b" stroke="#5e5e5e"/><path d="M2 4.4H7" stroke="#666"/></svg>
<svg style="left:51px;top:501.0px" width="10" height="11" viewBox="0 0 10 11"><path d="M0.5 0.6H8.5V6.6L4.5 10.1L0.5 6.6Z" fill="#2b2b2b" stroke="#5e5e5e"/><path d="M2 4.4H7" stroke="#666"/></svg>
<svg style="left:69.5px;top:540px" width="12" height="16" viewBox="0 0 12 16"><circle cx="5.3" cy="5.2" r="5.2" fill="#f0a732"/><path d="M2.5 8L3.5 10.5H7L8 8Z" fill="#f0a732"/><path d="M2.8 4L4 5.6L5.3 4L6.6 5.6L7.8 4" stroke="#ffeeb8" stroke-width="0.9" fill="none"/><rect x="3" y="10.8" width="4.6" height="4.2" fill="#a8a8a8"/><path d="M3 12.3H7.6M3 13.7H7.6" stroke="#5e5e5e" stroke-width="0.6"/></svg>
<div class="A" style="left:982px;top:223px;width:8px;height:245px;background:#4c4e50"></div>
<svg style="left:977px;top:1.5px" width="12" height="10" viewBox="0 0 12 10"><path d="M1 4.5L4.5 8L11 1.5" stroke="#5eae55" stroke-width="2.4" fill="none"/></svg>
<div class="A" style="left:117.5px;top:-13px;width:105px;height:15px;background:#232525"></div>
<div class="A" style="left:418.5px;top:2px;width:175px;height:15px;background:#232525"></div>
<div class="A" style="left:117.5px;top:17px;width:105px;height:15px;background:#232525"></div>
<div class="A" style="left:117.5px;top:32px;width:28px;height:15px;background:#3b2a2a"></div>
<div class="A" style="left:285.5px;top:77px;width:126px;height:15px;background:#232525"></div>
<div class="A" style="left:285.5px;top:137px;width:126px;height:15px;background:#232525"></div>
<div class="A" style="left:173.5px;top:257px;width:119px;height:15px;background:#232525"></div>
<div class="A" style="left:558.5px;top:317px;width:280px;height:15px;background:#232525"></div>
<div class="A" style="left:551.5px;top:332px;width:322px;height:15px;background:#232525"></div>
<div class="A" style="left:271.5px;top:407px;width:147px;height:15px;background:#232525"></div>
<div class="A" style="left:271.5px;top:467px;width:147px;height:15px;background:#232525"></div>
<div class="A" style="left:145.5px;top:497px;width:7px;height:15px;background:#3b514d"></div>
<div class="A" style="left:278.5px;top:527px;width:154px;height:15px;background:#232525"></div>
<div class="A" style="left:180.5px;top:542px;width:7px;height:15px;background:#3b514d"></div>
<div class="A" style="left:117.5px;top:557px;width:42px;height:15px;background:#3b2a2a"></div>
<div class="A" style="left:89.5px;top:572px;width:42px;height:15px;background:#3a3a22"></div>
<div class="ln" style="top:-13px"><span class="d">        </span><span class="p">&lt;?php else:  ?&gt;</span></div>
<div class="lnum" style="top:-13px">32</div>
<div class="ln" style="top:2px"><span class="d">            </span><span class="t">&lt;div</span><span class="a"> class=</span><span class="v">&quot;alert alert-dark p-1 my-1&quot;</span><span class="t">&gt;</span><span class="p">&lt;?= </span><span class="var">$site</span><span class="d">-&gt;</span><span class="var">description</span><span class="p"> ?&gt;</span><span class="t">&lt;/div&gt;</span></div>
<div class="lnum" style="top:2px">33</div>
<div class="ln" style="top:17px"><span class="d">        </span><span class="pb">&lt;?php endif; ?&gt;</span></div>
<div class="lnum" style="top:17px">34</div>
<div class="ln" style="top:32px"><span class="d">        </span><span class="t">&lt;div</span><span class="a"> class=</span><span class="v">&quot;row border border-warning mx-0 mt-1 rounded&quot;</span><span class="t">&gt;</span></div>
<div class="lnum" style="top:32px">35</div>
<div class="ln" style="top:47px"><span class="d">            </span><span class="t">&lt;div</span><span class="a"> class=</span><span class="v">&quot;col-4 text-success px-0&quot;</span><span class="t">&gt;</span></div>
<div class="lnum" style="top:47px">36</div>
<div class="ln" style="top:62px"><span class="d">                </span><span class="t">&lt;i</span><span class="a"> class=</span><span class="v">&quot;fas fa-dollar-sign&quot;</span><span class="t">&gt;&lt;/i&gt;</span></div>
<div class="lnum" style="top:62px">37</div>
<div class="ln" style="top:77px"><span class="d">                </span><span class="t">&lt;span</span><span class="a"> id=</span><span class="v">&quot;baks&quot;</span><span class="t">&gt;</span><span class="p">&lt;?= </span><span class="var">$user</span><span class="d">-&gt;</span><span class="var">baks</span><span class="p"> ?&gt;</span><span class="t">&lt;/span&gt;</span></div>
<div class="lnum" style="top:77px">38</div>
<div class="ln" style="top:92px"><span class="d">            </span><span class="t">&lt;/div&gt;</span></div>
<div class="lnum" style="top:92px">39</div>
<div class="ln" style="top:107px"><span class="d">            </span><span class="t">&lt;div</span><span class="a"> class=</span><span class="v">&quot;col-4 border-left border-right border-warning text-warning px-0&quot;</span><span class="t">&gt;</span></div>
<div class="lnum" style="top:107px">40</div>
<div class="ln" style="top:122px"><span class="d">                </span><span class="t">&lt;i</span><span class="a"> class=</span><span class="v">&quot;fas fa-coins&quot;</span><span class="t">&gt;&lt;/i&gt;</span></div>
<div class="lnum" style="top:122px">41</div>
<div class="ln" style="top:137px"><span class="d">                </span><span class="t">&lt;span</span><span class="a"> id=</span><span class="v">&quot;gold&quot;</span><span class="t">&gt;</span><span class="p">&lt;?= </span><span class="var">$user</span><span class="d">-&gt;</span><span class="var">gold</span><span class="p"> ?&gt;</span><span class="t">&lt;/span&gt;</span></div>
<div class="lnum" style="top:137px">42</div>
<div class="ln" style="top:152px"><span class="d">            </span><span class="t">&lt;/div&gt;</span></div>
<div class="lnum" style="top:152px">43</div>
<div class="ln" style="top:167px"><span class="d">            </span><span class="t">&lt;div</span><span class="a"> class=</span><span class="v">&quot;col-4 text-info px-0&quot;</span><span class="t">&gt;</span></div>
<div class="lnum" style="top:167px">44</div>
<div class="ln" style="top:182px"><span class="d">                </span><span class="t">&lt;i</span><span class="a"> class=</span><span class="v">&quot;fas fa-envelope&quot;</span><span class="t">&gt;&lt;/i&gt;</span></div>
<div class="lnum" style="top:182px">45</div>
<div class="ln" style="top:197px"><span class="d">                </span><span class="d">0</span></div>
<div class="lnum" style="top:197px">46</div>
<div class="ln" style="top:212px"><span class="d">            </span><span class="t">&lt;/div&gt;</span></div>
<div class="lnum" style="top:212px">47</div>
<div class="ln" style="top:227px"><span class="d">            </span><span class="t">&lt;div</span><span class="a"> class=</span><span class="v">&quot;col-2 border-top border-bottom border-warning text-secondary px-0&quot;</span><span class="t">&gt;</span></div>
<div class="lnum" style="top:227px">48</div>
<div class="ln" style="top:242px"><span class="d">                </span><span class="t">&lt;i</span><span class="a"> class=</span><span class="v">&quot;fas fa-level-up-alt&quot;</span><span class="t">&gt;&lt;/i&gt;</span></div>
<div class="lnum" style="top:242px">49</div>
<div class="ln" style="top:257px"><span class="d">                </span><span class="p">&lt;?= </span><span class="var">$user</span><span class="d">-&gt;</span><span class="var">lvl</span><span class="p"> ?&gt;</span></div>
<div class="lnum" style="top:257px">50</div>
<div class="ln" style="top:272px"><span class="d">            </span><span class="t">&lt;/div&gt;</span></div>
<div class="lnum" style="top:272px">51</div>
<div class="ln" style="top:287px"><span class="d">            </span><span class="t">&lt;div</span><span class="a"> class=</span><span class="v">&quot;col-10 border-left border-top border-bottom border-warning p-1&quot;</span><span class="t">&gt;</span></div>
<div class="lnum" style="top:287px">52</div>
<div class="ln" style="top:302px"><span class="d">                </span><span class="t">&lt;div</span><span class="a"> class=</span><span class="v">&quot;progress h-100&quot;</span><span class="t">&gt;</span></div>
<div class="lnum" style="top:302px">53</div>
<div class="ln" style="top:317px"><span class="d">                    </span><span class="t">&lt;div</span><span class="a"> class=</span><span class="v">&quot;progress-bar bg-success&quot;</span><span class="a"> style=&quot;width: </span><span class="p">&lt;?= </span><span class="n">100</span><span class="d"> / </span><span class="var">$user</span><span class="d">-&gt;</span><span class="var">exp_max</span><span class="d"> * </span><span class="var">$user</span><span class="d">-&gt;</span><span class="var">exp</span><span class="p"> ?&gt;</span><span class="a">%&quot;</span><span class="t">&gt;&lt;/div&gt;</span></div>
<div class="lnum" style="top:317px">54</div>
<div class="ln" style="top:332px"><span class="d">                    </span><span class="t">&lt;div</span><span class="a"> class=</span><span class="v">&quot;progress-bar bg-danger&quot;</span><span class="a"> style=&quot;width: </span><span class="p">&lt;?= </span><span class="n">100</span><span class="d"> - </span><span class="n">100</span><span class="d"> / </span><span class="var">$user</span><span class="d">-&gt;</span><span class="var">exp_max</span><span class="d"> * </span><span class="var">$user</span><span class="d">-&gt;</span><span class="var">exp</span><span class="p"> ?&gt;</span><span class="a">%&quot;</span><span class="t">&gt;&lt;/div&gt;</span></div>
<div class="lnum" style="top:332px">55</div>
<div class="ln" style="top:347px"><span class="d">                </span><span class="t">&lt;/div&gt;</span></div>
<div class="lnum" style="top:347px">56</div>
<div class="ln" style="top:362px"><span class="d">            </span><span class="t">&lt;/div&gt;</span></div>
<div class="lnum" style="top:362px">57</div>
<div class="ln" style="top:377px"><span class="d">            </span><span class="t">&lt;div</span><span class="a"> class=</span><span class="v">&quot;col-4 text-danger px-0&quot;</span><span class="t">&gt;</span></div>
<div class="lnum" style="top:377px">58</div>
<div class="ln" style="top:392px"><span class="d">                </span><span class="t">&lt;i</span><span class="a"> class=</span><span class="v">&quot;fas fa-heartbeat&quot;</span><span class="t">&gt;&lt;/i&gt;</span></div>
<div class="lnum" style="top:392px">59</div>
<div class="ln" style="top:407px"><span class="d">                </span><span class="t">&lt;span</span><span class="a"> id=</span><span class="v">&quot;hp&quot;</span><span class="t">&gt;</span><span class="p">&lt;?= </span><span class="d">(int)</span><span class="var">$user</span><span class="d">-&gt;</span><span class="var">hp</span><span class="p"> ?&gt;</span><span class="t">&lt;/span&gt;</span></div>
<div class="lnum" style="top:407px">60</div>
<div class="ln" style="top:422px"><span class="d">            </span><span class="t">&lt;/div&gt;</span></div>
<div class="lnum" style="top:422px">61</div>
<div class="ln" style="top:437px"><span class="d">            </span><span class="t">&lt;div</span><span class="a"> class=</span><span class="v">&quot;col-4 border-left border-right border-warning text-primary px-0&quot;</span><span class="t">&gt;</span></div>
<div class="lnum" style="top:437px">62</div>
<div class="ln" style="top:452px"><span class="d">                </span><span class="t">&lt;i</span><span class="a"> class=</span><span class="v">&quot;fas fa-bolt&quot;</span><span class="t">&gt;&lt;/i&gt;</span></div>
<div class="lnum" style="top:452px">63</div>
<div class="ln" style="top:467px"><span class="d">                </span><span class="t">&lt;span</span><span class="a"> id=</span><span class="v">&quot;mp&quot;</span><span class="t">&gt;</span><span class="p">&lt;?= </span><span class="d">(int)</span><span class="var">$user</span><span class="d">-&gt;</span><span class="var">mp</span><span class="p"> ?&gt;</span><span class="t">&lt;/span&gt;</span></div>
<div class="lnum" style="top:467px">64</div>
<div class="ln" style="top:482px"><span class="d">            </span><span class="t">&lt;/div&gt;</span></div>
<div class="lnum" style="top:482px">65</div>
<div class="ln" style="top:497px"><span class="d">            </span><span class="t">&lt;</span><span class="t">div</span><span class="a"> class=</span><span class="v">&quot;col-4 text-white px-0&quot;</span><span class="t">&gt;</span></div>
<div class="lnum" style="top:497px">66</div>
<div class="ln" style="top:512px"><span class="d">                </span><span class="t">&lt;i</span><span class="a"> class=</span><span class="v">&quot;fas fa-crosshairs&quot;</span><span class="t">&gt;&lt;/i&gt;</span></div>
<div class="lnum" style="top:512px">67</div>
<div class="ln" style="top:527px"><span class="d">                </span><span class="t">&lt;span</span><span class="a"> id=</span><span class="v">&quot;hit&quot;</span><span class="t">&gt;</span><span class="p">&lt;?= </span><span class="d">(int)</span><span class="var">$user</span><span class="d">-&gt;</span><span class="var">hit</span><span class="p"> ?&gt;</span><span class="t">&lt;/span&gt;</span></div>
<div class="lnum" style="top:527px">68</div>
<div class="ln" style="top:542px"><span class="d">            </span><span class="t">&lt;/div</span><span class="t">&gt;</span></div>
<div class="lnum" style="top:542px">69</div>
<div class="ln" style="top:557px"><span class="d">        </span><span class="t">&lt;/div&gt;</span></div>
<div class="lnum" style="top:557px">70</div>
<div class="ln" style="top:572px"><span class="d">    </span><span class="t">&lt;/div&gt;</span></div>
<div class="lnum" style="top:572px">71</div>
</div>
<div id="crumbs"><div class="cr" style="left:65px;color:#6a8cba">html</div>
<div class="cr" style="left:114px;color:#4ea7a4">body.bg-secondary.text-center.small.mx-auto</div>
<div class="cr" style="left:390px;color:#5ea552">div.container.bg-dark.px-1.pb-1</div>
<div class="cr" style="left:587px;color:#9ea55a">div.sticky-top.bg-dark.py-1</div>
<div class="cr" style="left:756px;color:#b25450">div.row.border.border-warning.mx-0.mt-1.rounded</div>
<svg style="left:101px;top:8px" width="5" height="8"><path d="M0.8 0.5L4 4L0.8 7.5" stroke="#666" stroke-width="1" fill="none"/></svg>
<svg style="left:377px;top:8px" width="5" height="8"><path d="M0.8 0.5L4 4L0.8 7.5" stroke="#666" stroke-width="1" fill="none"/></svg>
<svg style="left:573px;top:8px" width="5" height="8"><path d="M0.8 0.5L4 4L0.8 7.5" stroke="#666" stroke-width="1" fill="none"/></svg>
<svg style="left:743px;top:8px" width="5" height="8"><path d="M0.8 0.5L4 4L0.8 7.5" stroke="#666" stroke-width="1" fill="none"/></svg></div>
<div id="runbar"><svg style="left:31px;top:4px" width="12" height="14"><path d="M0.5 0.5L11 7L0.5 13.5Z" fill="#4daa4a"/></svg><div class="st" style="left:47px;top:2.5px;font-size:11.6px"><u style="text-decoration:underline;text-underline-offset:1.5px">4</u>: Run</div></div>
<div id="status"><svg style="left:9px;top:4.5px" width="15" height="15"><rect x="0.7" y="0.7" width="13" height="11" fill="#5a5a5a" stroke="#b8b8b8" stroke-width="1.2"/><path d="M0 13.5H14" stroke="#b8b8b8" stroke-width="1.2"/></svg><div class="st" style="left:31px;top:3px;font-size:12.35px">voynushka@localhost: * synchronized (2s 35ms) (today 11:28)</div><div class="st" style="left:1198px;top:3px">69:19</div><div class="st" style="left:1242px;top:3px">LF</div><div class="st" style="left:1270.5px;top:3px">UTF-8</div><svg style="left:1254.5px;top:6px" width="6" height="11"><path d="M0.3 4.5L2.75 1L5.2 4.5ZM0.3 6L2.75 9.5L5.2 6Z" fill="#9a9a9a"/></svg><svg style="left:1303px;top:6px" width="6" height="11"><path d="M0.3 4.5L2.75 1L5.2 4.5ZM0.3 6L2.75 9.5L5.2 6Z" fill="#9a9a9a"/></svg><svg style="left:1323px;top:6px" width="10" height="11" viewBox="0 0 10 11"><path d="M2 4V2.5A2 2 0 0 1 6 2.5" stroke="#9a9a9a" stroke-width="1.2" fill="none"/><rect x="1" y="4.5" width="8" height="6" rx="1" fill="#9a9a9a"/><path d="M3.5 6.5H6.5M5 6.5V9" stroke="#3c3f41" stroke-width="0.9"/></svg><svg style="left:1345px;top:4px" width="13" height="15" viewBox="0 0 13 15"><path d="M3 5.5Q3 1 6.5 1Q10 1 10 5.5" stroke="#9a9a9a" stroke-width="1.2" fill="none"/><path d="M1 5.5H12" stroke="#9a9a9a" stroke-width="1.2"/><path d="M3.5 7.5Q3.5 12 6.5 12Q9.5 12 9.5 7.5" stroke="#9a9a9a" stroke-width="1.2" fill="none"/><path d="M4.5 8.5H8.5M4.5 10.5L6.5 9.5L8.5 10.5M1 14H12" stroke="#9a9a9a" stroke-width="1"/><path d="M6.5 2.5V4" stroke="#9a9a9a" stroke-width="1"/></svg></div>
</body></html>
